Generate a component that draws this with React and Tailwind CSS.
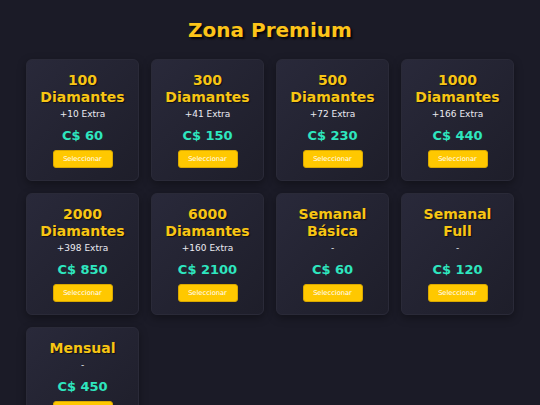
const packs = [
  { title: ['100', 'Diamantes'], extra: '+10 Extra', price: 'C$ 60' },
  { title: ['300', 'Diamantes'], extra: '+41 Extra', price: 'C$ 150' },
  { title: ['500', 'Diamantes'], extra: '+72 Extra', price: 'C$ 230' },
  { title: ['1000', 'Diamantes'], extra: '+166 Extra', price: 'C$ 440' },
  { title: ['2000', 'Diamantes'], extra: '+398 Extra', price: 'C$ 850' },
  { title: ['6000', 'Diamantes'], extra: '+160 Extra', price: 'C$ 2100' },
  { title: ['Semanal', 'Básica'], extra: '-', price: 'C$ 60' },
  { title: ['Semanal', 'Full'], extra: '-', price: 'C$ 120' },
  { title: ['Mensual'], extra: '-', price: 'C$ 450' },
];

export default function App() {
  return (
    <div className="min-h-screen bg-[#1b1b27] px-[26px] pt-[14px] pb-10 font-['DejaVu_Sans',sans-serif]">
      <h1 className="text-center text-[20px] font-bold text-[#fcc419] leading-[32px] [text-shadow:2px_2px_2px_rgba(0,0,0,0.8)]">
        Zona Premium
      </h1>

      <div className="grid grid-cols-4 gap-3 mt-[13px]">
        {packs.map((p, i) => (
          <div
            key={i}
            className="flex flex-col items-center text-center rounded-md bg-gradient-to-br from-[#29293a] to-[#1e1e2a] border border-[#2a2a38] shadow-[0_3px_8px_rgba(0,0,0,0.35)] pt-[12px] pb-[12px] px-2"
          >
            <h2 className="text-[14px] font-bold leading-[17px] text-[#f7c514] [text-shadow:1px_1px_1px_rgba(0,0,0,0.6)]">
              {p.title.map((t) => (
                <div key={t}>{t}</div>
              ))}
            </h2>
            <p className="mt-[2px] text-[9px] leading-[12px] text-[#ececf2]">{p.extra}</p>
            <p className="mt-[8px] text-[13px] font-bold leading-[16px] text-[#2ee6bf]">{p.price}</p>
            <button className="mt-[6px] h-[18px] w-[60px] rounded-[3px] bg-[#ffc800] border border-[#d9a800] text-white text-[6.7px] leading-none">
              Seleccionar
            </button>
          </div>
        ))}
      </div>
    </div>
  );
}
